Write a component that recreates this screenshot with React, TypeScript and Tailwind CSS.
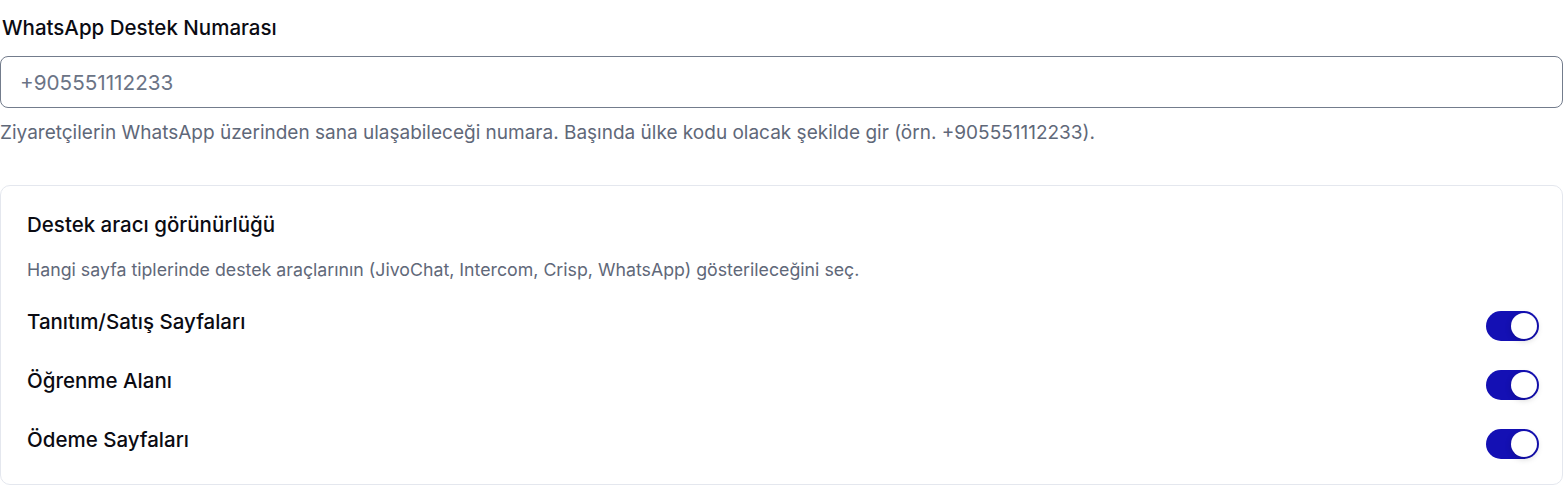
import { useState } from "react";

const PAGES = ["Tanıtım/Satış Sayfaları", "Öğrenme Alanı", "Ödeme Sayfaları"];

function Toggle({ on, onChange }: { on: boolean; onChange: () => void }) {
  return (
    <button
      type="button"
      onClick={onChange}
      className={`relative flex h-[30px] w-[53px] shrink-0 items-center rounded-full px-[2px] transition-colors ${on ? "bg-[#1410b4]" : "bg-gray-300"}`}
    >
      <span
        className={`block h-[26px] w-[26px] rounded-full bg-white shadow-[0_2px_6px_rgba(0,0,0,0.18)] transition-transform ${on ? "translate-x-[23px]" : "translate-x-0"}`}
      />
    </button>
  );
}

export default function App() {
  const [enabled, setEnabled] = useState([true, true, true]);

  return (
    <div className="w-[1568px] bg-white font-['Inter',sans-serif] text-[#0b0b12]">
      <div className="pr-[5px] pt-[17px]">
        <label className="block pl-[2px] text-[20.5px] font-medium leading-[22px]">WhatsApp Destek Numarası</label>
        <input
          type="text"
          placeholder="+905551112233"
          className="mt-[17px] block h-[52px] w-full rounded-[8px] border-[1.5px] border-[#737c8c] px-[19px] text-[20.7px] placeholder:text-[#6b7486] focus:outline-none"
        />
        <p className="mt-[14px] text-[19px] leading-[22px] text-[#5f6879]">
          Ziyaretçilerin WhatsApp üzerinden sana ulaşabileceği numara. Başında ülke kodu olacak şekilde gir (örn. +905551112233).
        </p>

        <div className="mt-[41px] rounded-[10px] border border-[#e4e7ee] pb-[25px] pl-[26px] pr-[23px] pt-[26px]">
          <h3 className="text-[20.5px] font-medium leading-[26px]">Destek aracı görünürlüğü</h3>
          <p className="mt-[21px] text-[17.75px] leading-[22px] text-[#5f6879]">
            Hangi sayfa tiplerinde destek araçlarının (JivoChat, Intercom, Crisp, WhatsApp) gösterileceğini seç.
          </p>
          <div className="mt-[30px] flex flex-col gap-[29px]">
            {PAGES.map((p, i) => (
              <div key={p} className="flex items-center justify-between">
                <span className="-mt-[9px] text-[20.5px] font-medium leading-[24px]">{p}</span>
                <Toggle
                  on={enabled[i]}
                  onChange={() => setEnabled(prev => prev.map((v, j) => (j === i ? !v : v)))}
                />
              </div>
            ))}
          </div>
        </div>
      </div>
    </div>
  );
}
